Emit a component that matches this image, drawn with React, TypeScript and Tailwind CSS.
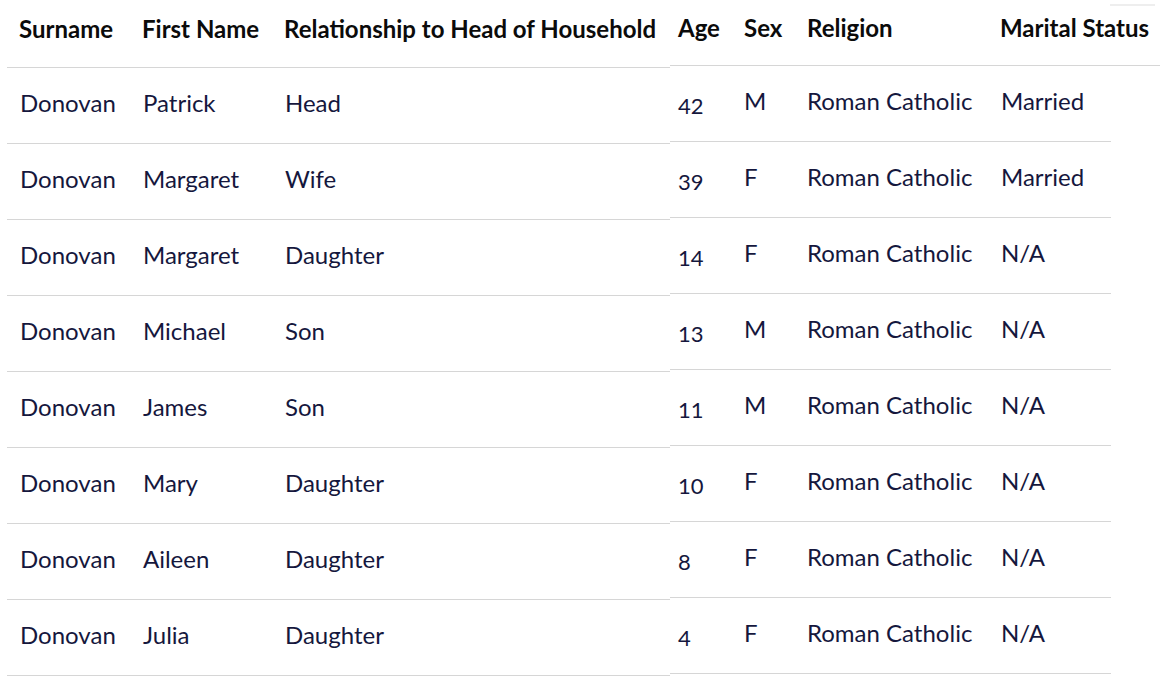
import React from 'react'

type Person = {
  surname: string
  first: string
  relation: string
  age: string
  sex: string
  religion: string
  marital: string
}

const people: Person[] = [
  { surname: 'Donovan', first: 'Patrick', relation: 'Head', age: '42', sex: 'M', religion: 'Roman Catholic', marital: 'Married' },
  { surname: 'Donovan', first: 'Margaret', relation: 'Wife', age: '39', sex: 'F', religion: 'Roman Catholic', marital: 'Married' },
  { surname: 'Donovan', first: 'Margaret', relation: 'Daughter', age: '14', sex: 'F', religion: 'Roman Catholic', marital: 'N/A' },
  { surname: 'Donovan', first: 'Michael', relation: 'Son', age: '13', sex: 'M', religion: 'Roman Catholic', marital: 'N/A' },
  { surname: 'Donovan', first: 'James', relation: 'Son', age: '11', sex: 'M', religion: 'Roman Catholic', marital: 'N/A' },
  { surname: 'Donovan', first: 'Mary', relation: 'Daughter', age: '10', sex: 'F', religion: 'Roman Catholic', marital: 'N/A' },
  { surname: 'Donovan', first: 'Aileen', relation: 'Daughter', age: '8', sex: 'F', religion: 'Roman Catholic', marital: 'N/A' },
  { surname: 'Donovan', first: 'Julia', relation: 'Daughter', age: '4', sex: 'F', religion: 'Roman Catholic', marital: 'N/A' },
]

const App = () => {
  return (
    <div className="flex h-[681px] w-[1165px] overflow-hidden bg-white font-['Lato','Liberation_Sans',sans-serif] text-[24px]">
      {/* household - left part */}
      <div className="ml-[7px] w-[663px]">
        <div className="flex h-[68px] items-center border-b border-[#d6d6d6] pb-[10px] font-bold text-[#0b0b0b]">
          <div className="w-[123px] shrink-0 pl-[12px]">Surname</div>
          <div className="w-[142px] shrink-0 pl-[12px]">First Name</div>
          <div className="flex-1 whitespace-nowrap pl-[12px]">Relationship to Head of Household</div>
        </div>
        {people.map((p, i) => (
          <div key={i} className="flex h-[76px] items-center border-b border-[#d6d6d6] pb-[6px] text-[#15173d]">
            <div className="w-[123px] shrink-0 pl-[13px]">{p.surname}</div>
            <div className="w-[142px] shrink-0 pl-[13px]">{p.first}</div>
            <div className="flex-1 pl-[13px]">{p.relation}</div>
          </div>
        ))}
      </div>

      {/* household - right part */}
      <div className="relative w-[490px]">
        <div className="absolute right-[5px] top-[4px] h-[2px] w-[45px] bg-[#eeeeee]" />
        <div className="flex h-[66px] items-center border-b border-[#d6d6d6] pb-[10px] font-bold text-[#0b0b0b]">
          <div className="w-[66px] shrink-0 pl-[8px]">Age</div>
          <div className="w-[63px] shrink-0 pl-[8px]">Sex</div>
          <div className="w-[193px] shrink-0 pl-[8px]">Religion</div>
          <div className="flex-1 whitespace-nowrap pl-[8px]">Marital Status</div>
        </div>
        {people.map((p, i) => (
          <div key={i} className="flex h-[76px] w-[441px] items-center border-b border-[#d6d6d6] pb-[6px] text-[#15173d]">
            <div className="w-[66px] shrink-0 pl-[8px] pt-[9px] text-[22px]">{p.age}</div>
            <div className="w-[63px] shrink-0 pl-[8px]">{p.sex}</div>
            <div className="w-[193px] shrink-0 pl-[8px]">{p.religion}</div>
            <div className="flex-1 pl-[9px]">{p.marital}</div>
          </div>
        ))}
      </div>
    </div>
  )
}

export default App
